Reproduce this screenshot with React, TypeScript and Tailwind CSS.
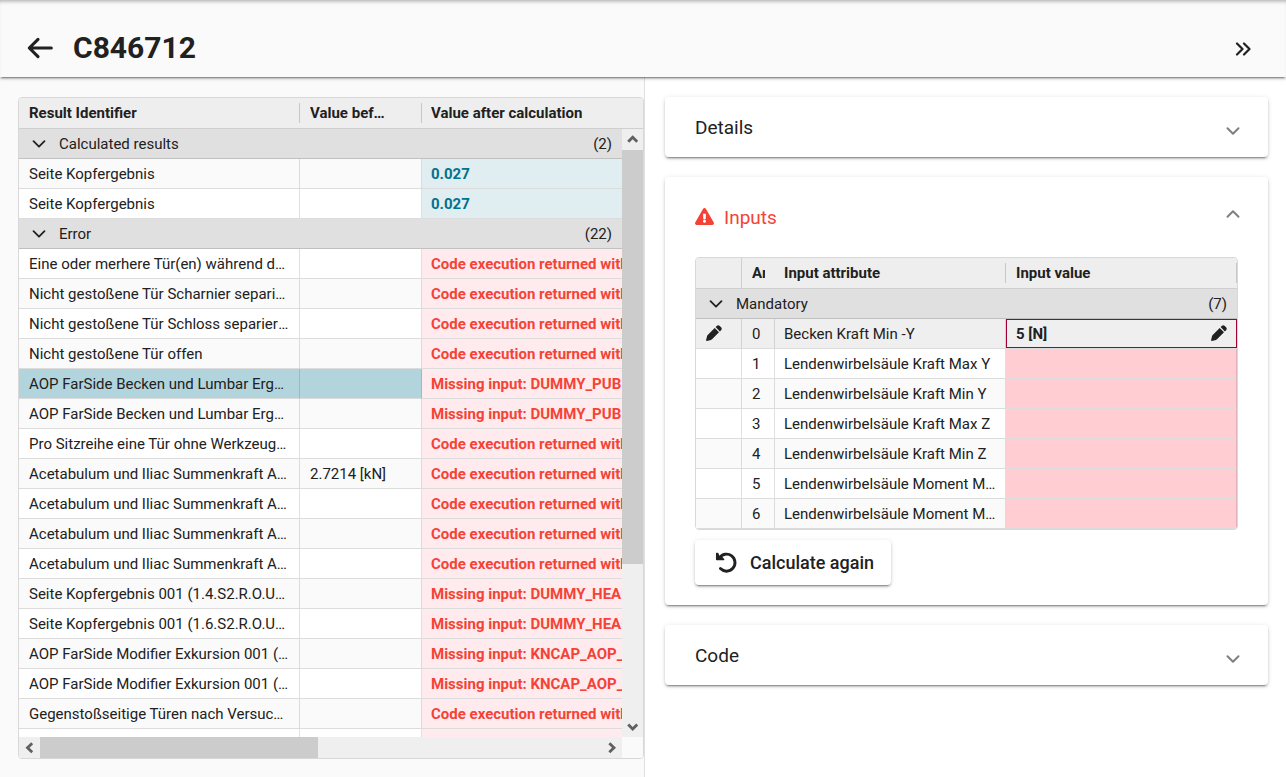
import { useState } from "react";
import type { ReactNode } from "react";
import { FaExclamationTriangle } from "react-icons/fa";

type IconProps = { d: string; className: string; box?: string; width?: number };

function LineIcon({ d, className, box = "0 0 16 16", width = 2 }: IconProps) {
  return (
    <svg viewBox={box} className={className} fill="none" stroke="currentColor" strokeWidth={width} strokeLinecap="round" strokeLinejoin="round" aria-hidden="true">
      <path d={d} />
    </svg>
  );
}

function ScrollArrow({ d }: { d: string }) {
  return (
    <svg viewBox="0 0 21 21" className="size-[21px] shrink-0" fill="none" stroke="currentColor" strokeWidth="2.8" aria-hidden="true">
      <path d={d} />
    </svg>
  );
}

const DOWN = "M2.5 5.2 L8 10.7 L13.5 5.2";
const UP = "M2.5 10.7 L8 5.2 L13.5 10.7";

function Pencil() {
  return (
    <svg viewBox="0 0 16 16" className="mb-0.5 size-4 shrink-0" fill="currentColor" aria-hidden="true">
      <path d="M8.7 3 13 7.3 6 14.3Q5.6 14.7 5 14.9L.9 15.9Q0 16 .1 15.1L1.1 11Q1.3 10.4 1.7 10ZM9.6 2.1 11 .7Q12.2-.2 13.5.7L15.3 2.5Q16.2 3.8 15.3 5L13.9 6.4Z" />
    </svg>
  );
}

function Undo() {
  return (
    <svg viewBox="0 1 22 22" className="size-[22px] shrink-0" fill="none" stroke="currentColor" strokeWidth="2.9" strokeLinecap="round" aria-hidden="true">
      <path d="M4.4 7A8.5 8.5 0 1 1 5.4 17.6" />
      <path d="M1.7 2.4V8.5H8.6L6.8 6.4 4.4 6.6 2.6 2.4Z" fill="currentColor" strokeWidth="1.5" strokeLinejoin="round" />
    </svg>
  );
}

type Result = { name: string; before?: string; after: string; selected?: boolean };

const CODE = "Code execution returned with errors";
const DUMMY = "Missing input: DUMMY_PUBIC";
const HEAD = "Missing input: DUMMY_HEAD";
const KNCAP = "Missing input: KNCAP_AOP_HEAD";

const calculated: Result[] = [
  { name: "Seite Kopfergebnis", after: "0.027" },
  { name: "Seite Kopfergebnis", after: "0.027" },
];

const errors: Result[] = [
  { name: "Eine oder merhere Tür(en) während des Versuchs", after: CODE },
  { name: "Nicht gestoßene Tür Scharnier separiert", after: CODE },
  { name: "Nicht gestoßene Tür Schloss separiert nach Versuch", after: CODE },
  { name: "Nicht gestoßene Tür offen", after: CODE },
  { name: "AOP FarSide Becken und Lumbar Ergebnis", after: DUMMY, selected: true },
  { name: "AOP FarSide Becken und Lumbar Ergebnis", after: DUMMY },
  { name: "Pro Sitzreihe eine Tür ohne Werkzeug zu öffnen", after: CODE },
  { name: "Acetabulum und Iliac Summenkraft AOP", before: "2.7214 [kN]", after: CODE },
  { name: "Acetabulum und Iliac Summenkraft AOP", after: CODE },
  { name: "Acetabulum und Iliac Summenkraft AOP", after: CODE },
  { name: "Acetabulum und Iliac Summenkraft AOP", after: CODE },
  { name: "Seite Kopfergebnis 001 (1.4.S2.R.O.U.0)", after: HEAD },
  { name: "Seite Kopfergebnis 001 (1.6.S2.R.O.U.0)", after: HEAD },
  { name: "AOP FarSide Modifier Exkursion 001 (1.4)", after: KNCAP },
  { name: "AOP FarSide Modifier Exkursion 001 (1.6)", after: KNCAP },
  { name: "Gegenstoßseitige Türen nach Versuch offen", after: CODE },
  { name: "", after: "" },
];

function HeadCell({ children, line = true, tight = false }: { children?: ReactNode; line?: boolean; tight?: boolean }) {
  return (
    <th scope="col" className="h-[31px] border-b border-[#cfcfcf] bg-[#eeeeee] p-0 text-left font-bold">
      <div className={tight ? "flex items-center pl-[9px]" : "flex items-center pl-2.5"}>
        <span className={line ? "mr-7 min-w-0 flex-1 truncate" : "mr-2.5 min-w-0 flex-1 overflow-hidden whitespace-nowrap"}>{children}</span>
        {line && <span className="h-5 w-px shrink-0 bg-[#c8c8c8]" />}
      </div>
    </th>
  );
}

function GroupRow({ label, count, span, wide }: { label: string; count: number; span: number; wide?: boolean }) {
  return (
    <tr>
      <td colSpan={span} className="h-[30px] border-b border-[#c0c0c0] bg-[#e0e0e0] p-0">
        <div className={wide ? "flex items-center pr-[31px] pl-3" : "flex items-center pr-2.5 pl-3"}>
          <button type="button" className="flex items-center gap-3">
            <LineIcon d={DOWN} className="size-4" width={1.8} />
            <span>{label}</span>
          </button>
          <span className="ml-auto">({count})</span>
        </div>
      </td>
    </tr>
  );
}

const cell = "h-[30px] truncate border-r border-b border-r-black/12 border-b-[#dcdcdc] px-2.5 py-0";
const tightCell = "h-[30px] truncate border-r border-b border-r-black/12 border-b-[#dcdcdc] px-[9px] py-0";

function ResultRow({ row, tinted, ok }: { row: Result; tinted: boolean; ok?: boolean }) {
  return (
    <tr className={row.selected ? "bg-[#b2d4dc]" : tinted ? "bg-[#fafafa]" : "bg-white"}>
      <td className={cell}>{row.name}</td>
      <td className={cell}>{row.before}</td>
      <td
        className={
          ok
            ? "h-[30px] overflow-hidden border-b border-[#dcdcdc] bg-[#e0edf1] px-[9px] py-0 font-bold whitespace-nowrap text-[#00728c]"
            : "h-[30px] overflow-hidden border-b border-[#dcdcdc] bg-[#ffebee] px-[9px] py-0 font-bold whitespace-nowrap text-[#f44336]"
        }
      >
        {row.after}
      </td>
    </tr>
  );
}

function Results() {
  return (
    <div className="relative flex min-h-0 flex-1 flex-col overflow-hidden rounded border border-[#d8d8d8]">
      <div className="min-h-0 flex-1 overflow-hidden">
        <table className="w-full table-fixed border-separate border-spacing-0">
          <colgroup>
            <col className="w-[281px]" />
            <col className="w-[122px]" />
            <col />
          </colgroup>
          <thead>
            <tr>
              <HeadCell>Result Identifier</HeadCell>
              <HeadCell>Value before calculation</HeadCell>
              <HeadCell line={false} tight>
                Value after calculation
              </HeadCell>
            </tr>
          </thead>
          <tbody>
            <GroupRow label="Calculated results" count={2} span={3} wide />
            {calculated.map((r, i) => (
              <ResultRow key={i} row={r} tinted={i % 2 === 0} ok />
            ))}
            <GroupRow label="Error" count={22} span={3} wide />
            {errors.map((r, i) => (
              <ResultRow key={i} row={r} tinted={i % 2 === 1} />
            ))}
          </tbody>
        </table>
      </div>
      <div className="absolute top-[31px] right-0 bottom-[21px] flex w-[21px] flex-col bg-[#efefef] text-[#606060]">
        <ScrollArrow d="M6.2 12.8 L10.7 8.3 L15.2 12.8" />
        <div className="h-[414px] bg-[#cccccc]" />
        <div className="mt-auto">
          <ScrollArrow d="M6.2 8.5 L10.7 13 L15.2 8.5" />
        </div>
      </div>
      <div className="flex h-[21px] shrink-0 bg-[#fafafa] pr-[21px] text-[#606060]">
        <div className="flex flex-1 justify-between bg-[#efefef]">
          <div className="flex">
            <ScrollArrow d="M13.2 6.2 L8.5 10.7 L13.2 15.2" />
            <div className="w-[278px] bg-[#cccccc]" />
          </div>
          <ScrollArrow d="M8.3 6.2 L13 10.7 L8.3 15.2" />
        </div>
      </div>
    </div>
  );
}

const inputs = [
  "Becken Kraft Min -Y",
  "Lendenwirbelsäule Kraft Max Y",
  "Lendenwirbelsäule Kraft Min Y",
  "Lendenwirbelsäule Kraft Max Z",
  "Lendenwirbelsäule Kraft Min Z",
  "Lendenwirbelsäule Moment Max X",
  "Lendenwirbelsäule Moment Min X",
];

function Inputs() {
  return (
    <div className="overflow-hidden rounded border border-[#d8d8d8]">
      <table className="w-full table-fixed border-separate border-spacing-0">
        <colgroup>
          <col className="w-[46px]" />
          <col className="w-[33px]" />
          <col className="w-[231px]" />
          <col />
        </colgroup>
        <thead>
          <tr>
            <th className="h-[31px] border-r border-b border-[#cfcfcf] bg-[#eeeeee] p-0" />
            <HeadCell line={false}>Ar</HeadCell>
            <HeadCell tight>Input attribute</HeadCell>
            <HeadCell>Input value</HeadCell>
          </tr>
        </thead>
        <tbody>
          <GroupRow label="Mandatory" count={7} span={4} />
          {inputs.map((name, i) => (
            <tr key={name} className={i === 0 ? "bg-[#efefef]" : i % 2 ? "bg-white" : "bg-[#fafafa]"}>
              <td className={cell}>{i === 0 && <Pencil />}</td>
              <td className={cell}>{i}</td>
              <td className={tightCell}>{name}</td>
              {i === 0 ? (
                <td className="h-[30px] border-b border-[#dcdcdc] p-0 font-bold">
                  <div className="flex h-[29px] items-center justify-between border border-[#a50034] px-[9px]">
                    <span>5 [N]</span>
                    <button type="button" aria-label="Edit value">
                      <Pencil />
                    </button>
                  </div>
                </td>
              ) : (
                <td className="h-[30px] border-r border-b border-r-black/12 border-b-[#dcdcdc] bg-[#ffcdd2] p-0" />
              )}
            </tr>
          ))}
        </tbody>
      </table>
    </div>
  );
}

function Card({ title, alert, initial = false, children }: { title: string; alert?: boolean; initial?: boolean; children?: ReactNode }) {
  const [open, setOpen] = useState(initial);
  return (
    <section className="rounded bg-white shadow-[0_3px_1px_-2px_rgba(0,0,0,0.26),0_2px_2px_0_rgba(0,0,0,0.18),0_1px_5px_0_rgba(0,0,0,0.13)]">
      <button
        type="button"
        aria-expanded={open}
        onClick={() => setOpen(!open)}
        className={open ? "flex h-20 w-full items-center px-[30px] pt-0.5 text-left" : "flex h-[60px] w-full items-center px-[30px] pt-0.5 text-left"}
      >
        {alert && <FaExclamationTriangle className="mr-2.5 mb-1 size-[19px] text-[#f44336]" />}
        <span className={alert ? "text-[19px] leading-6 text-[#f44336]" : "text-[19px] leading-6"}>{title}</span>
        <LineIcon d={open ? UP : DOWN} className={open ? "-mr-[3px] mb-2 ml-auto size-4 text-[#808080]" : "mt-1.5 -mr-[3px] ml-auto size-4 text-[#808080]"} />
      </button>
      {open && children}
    </section>
  );
}

export default function App() {
  return (
    <div className="flex h-screen flex-col overflow-hidden bg-white font-['Roboto',sans-serif] text-[15px] leading-5 text-[#212121]">
      <header className="z-10 flex h-[77px] shrink-0 items-center gap-5 bg-[#fafafa] pt-[18px] pr-[35px] pl-[27px] shadow-[inset_0_4px_4px_-3px_rgba(0,0,0,0.35),0_3px_1px_-2px_rgba(0,0,0,0.26),0_2px_2px_0_rgba(0,0,0,0.18),0_1px_5px_0_rgba(0,0,0,0.13)]">
        <button type="button" aria-label="Back">
          <LineIcon d="M11 3.3 L2.3 12 L11 20.7 M3 12 H24.3" box="0 0 26 24" className="h-6 w-[26px]" width={3.1} />
        </button>
        <h1 className="text-[30px] leading-9 font-bold">C846712</h1>
        <button type="button" aria-label="Expand" className="mt-0.5 ml-auto">
          <LineIcon d="M2 2.5 L7.5 8 L2 13.5 M9 2.5 L14.5 8 L9 13.5" className="size-4" width={2.2} />
        </button>
      </header>
      <div className="grid min-h-0 flex-1 grid-cols-[645fr_641fr]">
        <div className="flex min-h-0 flex-col border-r border-[#e0e0e0] bg-[#fafafa] pt-5 pb-[18px] pl-[18px]">
          <Results />
        </div>
        <main className="flex min-w-0 flex-col gap-5 overflow-hidden py-5 pr-[18px] pl-5">
          <Card title="Details" />
          <Card title="Inputs" alert initial>
            <div className="px-[30px] pb-5">
              <Inputs />
              <button type="button" className="mt-2.5 flex h-[45px] items-center gap-[13px] rounded bg-white pr-[17px] pl-5 text-lg font-medium shadow-[0_3px_1px_-2px_rgba(0,0,0,0.26),0_2px_2px_0_rgba(0,0,0,0.18),0_1px_5px_0_rgba(0,0,0,0.13)]">
                <Undo />
                Calculate again
              </button>
            </div>
          </Card>
          <Card title="Code" />
        </main>
      </div>
    </div>
  );
}
